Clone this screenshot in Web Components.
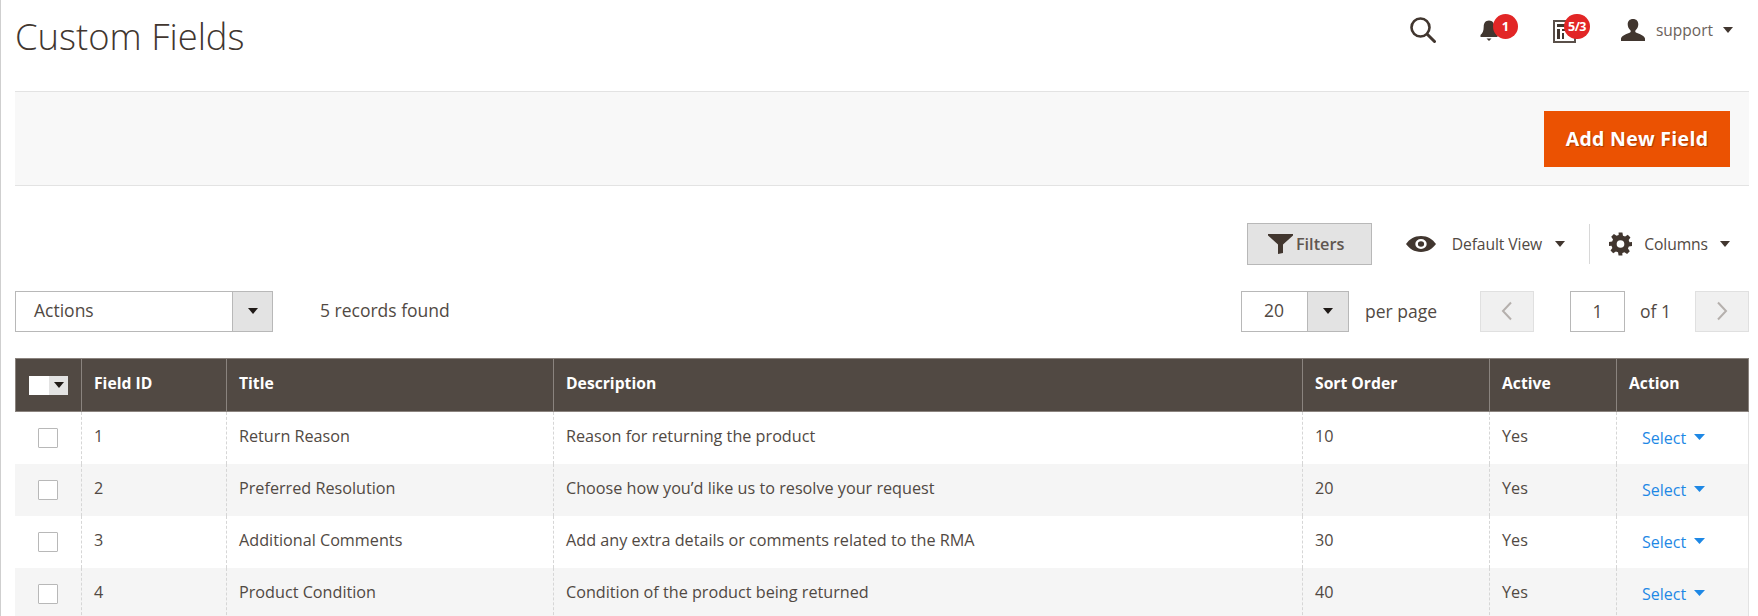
<!DOCTYPE html>
<html>
<head>
<meta charset="utf-8">
<title>Custom Fields</title>
<style>
    html, body { margin: 0; padding: 0; background: #fff; }
    body { font-family: "Open Sans", "Liberation Sans", sans-serif; color: #41362f; height: 616px; overflow: hidden; }
</style>
</head>
<body>
<admin-page>
    <page-header slot="header" heading="Custom Fields"></page-header>
    <action-bar slot="actions" label="Add New Field"></action-bar>
    <grid-toolbar slot="toolbar"></grid-toolbar>
    <grid-pager slot="pager" records="5 records found"></grid-pager>
    <data-grid slot="grid"></data-grid>
</admin-page>

<script>
const caret = (color = '#41362f', w = 10, h = 6) =>
    `<svg width="${w}" height="${h}" viewBox="0 0 10 6" preserveAspectRatio="none" style="display:block"><path d="M0 0h10L5 6z" fill="${color}"/></svg>`;

customElements.define('admin-page', class extends HTMLElement {
    constructor() {
        super();
        this.attachShadow({ mode: 'open' }).innerHTML = `
        <style>
            :host { display: block; height: 616px; box-sizing: border-box; border-left: 1px solid #cfcfcf; padding: 0 9px 0 14px; overflow: hidden; }
        </style>
        <slot name="header"></slot>
        <slot name="actions"></slot>
        <slot name="toolbar"></slot>
        <slot name="pager"></slot>
        <slot name="grid"></slot>`;
    }
});

customElements.define('page-header', class extends HTMLElement {
    constructor() {
        super();
        this.attachShadow({ mode: 'open' }).innerHTML = `
        <style>
            :host { display: flex; justify-content: space-between; height: 91px; box-sizing: border-box; }
            h1 { margin: 11px 0 0; font-size: 36.400px; line-height: 50px; font-weight: 300; color: #41362f; }
            .tools { display: flex; align-items: flex-start; padding-top: 14px; margin-right: 5px; }
            .tool { position: relative; display: block; height: 30px; }
            .search { margin: 3px 44px 0 0; width: 26px; }
            .bell { width: 39px; margin-right: 34px; }
            .msgs { width: 37px; margin-right: 31px; }
            .badge { position: absolute; top: 0; height: 25px; width: 25px; box-sizing: border-box; border-radius: 13px; background: #e22626; color: #fff; font-size: 13px; font-weight: 700; line-height: 25px; text-align: center; }
            .user { display: flex; align-items: center; height: 26px; font-size: 15.500px; color: #6b625b; }
            .user svg { margin-right: 11px; }
            .user span { margin-right: 10px; }
        </style>
        <h1></h1>
        <div class="tools">
            <div class="tool search">
                <svg width="26" height="26" viewBox="0 0 26 26" style="display:block"><circle cx="10.500" cy="10.500" r="9" fill="none" stroke="#41362f" stroke-width="2.600"/><path d="M17.500 17.500l7 7" stroke="#41362f" stroke-width="3" stroke-linecap="round"/></svg>
            </div>
            <div class="tool bell">
                <svg width="18" height="22" viewBox="0 0 18 22" style="display:block;margin-top:6px"><path d="M9 0.500c-3.600 0-5.300 2.800-5.300 6.200 0 4.300-1 6.400-3.200 8.400v1.900h17v-1.900c-2.200-2-3.200-4.100-3.200-8.400C14.300 3.300 12.600.5 9 .5z" fill="#41362f"/><path d="M6.500 18.500h5L9 21z" fill="#41362f"/></svg>
                <span class="badge" style="left:13px">1</span>
            </div>
            <div class="tool msgs">
                <svg width="23" height="23" viewBox="0 0 23 23" style="display:block;margin-top:6px"><path d="M1 1h21v21H1z" fill="#fff" stroke="#5a504a" stroke-width="2"/><path d="M4 4h15v3H4zM4 9h3v10H4zM9 9h10v2H9zM9 13h2v6H9z" fill="#41362f"/></svg>
                <span class="badge" style="left:11px;width:26px;font-size:12.500px;letter-spacing:-.6px">5/3</span>
            </div>
            <div class="user" style="margin-top:3px">
                <svg width="24" height="22" viewBox="0 0 24 24" preserveAspectRatio="none"><path d="M12 0c3.400 0 5.300 2.400 5.300 5.700 0 2.700-1.100 5.200-2.700 6.500-.5.500-.5 2 .3 2.600 2.700 1.700 8.100 2.500 9.100 6.600V24H0v-2.600c1-4.100 6.400-4.900 9.100-6.600.8-.6.8-2.100.3-2.600-1.600-1.300-2.700-3.800-2.700-6.500C6.700 2.400 8.600 0 12 0z" fill="#41362f"/></svg>
                <span>support</span>${caret('#41362f', 10, 6)}
            </div>
        </div>`;
        this.shadowRoot.querySelector('h1').textContent = this.getAttribute('heading');
    }
});

customElements.define('action-bar', class extends HTMLElement {
    constructor() {
        super();
        this.attachShadow({ mode: 'open' }).innerHTML = `
        <style>
            :host { display: flex; justify-content: flex-end; align-items: flex-start; height: 95px; box-sizing: border-box; background: #f8f8f8; border-top: 1px solid #e3e3e3; border-bottom: 1px solid #e3e3e3; padding: 19px 19px 0 0; }
            button { height: 56px; width: 186px; border: 0; padding: 0 0 2px; background: #eb5202; color: #fff; font: 700 19.500px "Open Sans", sans-serif; letter-spacing: .3px; text-shadow: 1px 1px 1px rgba(0, 0, 0, .3); }
        </style>
        <button></button>`;
        this.shadowRoot.querySelector('button').textContent = this.getAttribute('label');
    }
});

customElements.define('grid-toolbar', class extends HTMLElement {
    constructor() {
        super();
        this.attachShadow({ mode: 'open' }).innerHTML = `
        <style>
            :host { display: flex; justify-content: flex-end; align-items: center; height: 42px; margin-top: 37px; font-size: 15.700px; color: #514943; }
            .filters { width: 125px; height: 42px; box-sizing: border-box; display: flex; align-items: center; justify-content: center; gap: 3px; padding-right: 6px; background: #e3e3e3; border: 1px solid #b8b8b8; font-weight: 600; font-size: 16.300px; color: #5f5650; }
            .view { display: flex; align-items: center; margin-left: 34px; }
            .sep { width: 1px; height: 40px; background: #d8d8d8; margin: 0 19px 0 24px; }
            .cols { display: flex; align-items: center; margin-right: 19px; }
            .label { margin: 0 12px 0 12px; letter-spacing: -.1px; }
        </style>
        <div class="filters">
            <svg width="25" height="20" viewBox="0 0 25 20"><path d="M0 0h25v1.500L15 10.500V19l-5 1v-9.500L0 1.500z" fill="#41362f"/></svg>
            <span>Filters</span>
        </div>
        <div class="view">
            <svg width="30" height="16" viewBox="0 0 29 18" preserveAspectRatio="none"><path fill-rule="evenodd" d="M14.500 0C21 0 26 4 29 9c-3 5-8 9-14.500 9S3 14 0 9C3 4 8 0 14.500 0zm0 3.500a5.500 5.500 0 100 11 5.500 5.500 0 000-11zm0 2.500a3 3 0 110 6 3 3 0 010-6z" fill="#41362f"/></svg>
            <span class="label" style="margin:0 13px 0 16px">Default View</span>${caret('#41362f', 10, 6)}
        </div>
        <div class="sep"></div>
        <div class="cols">
            <svg width="23" height="24" viewBox="0 0 24 24"><path fill-rule="evenodd" d="M10 0h4l.6 3.300 2.200.9 2.800-1.900 2.800 2.800-1.900 2.800.9 2.200L24 10v4l-3.300.6-.9 2.200 1.900 2.800-2.800 2.800-2.800-1.900-2.200.9L14 24h-4l-.6-3.300-2.200-.9-2.800 1.900-2.800-2.800 1.900-2.800-.9-2.200L0 14v-4l3.300-.6.900-2.200-1.900-2.800 2.800-2.800 2.800 1.900 2.200-.9zM12 8a4 4 0 100 8 4 4 0 000-8z" fill="#41362f"/></svg>
            <span class="label">Columns</span>${caret('#41362f', 10, 6)}
        </div>`;
    }
});

customElements.define('select-box', class extends HTMLElement {
    constructor() {
        super();
        this.attachShadow({ mode: 'open' }).innerHTML = `
        <style>
            :host { display: flex; height: 41px; box-sizing: border-box; border: 1px solid #b8b8b8; background: #fff; font-size: 17.500px; color: #514943; }
            .value { flex: 1; display: flex; align-items: center; padding: 0 0 2px var(--pad, 18px); }
            .arrow { width: var(--arrow, 39px); display: flex; align-items: center; justify-content: center; background: #e3e3e3; border-left: 1px solid #b8b8b8; }
        </style>
        <div class="value"><slot></slot></div>
        <div class="arrow">${caret('#1f1a17', 10, 6)}</div>`;
    }
});

customElements.define('grid-pager', class extends HTMLElement {
    constructor() {
        super();
        this.attachShadow({ mode: 'open' }).innerHTML = `
        <style>
            :host { display: flex; align-items: center; height: 42px; margin-top: 25px; font-size: 17.500px; color: #514943; white-space: nowrap; }
            select-box.actions { width: 258px; }
            .found { margin: 0 0 3px 47px; flex: 1; }
            select-box.size { width: 108px; --pad: 22px; --arrow: 40px; }
            .per { margin: 0 0 1px 16px; width: 72px; }
            .nav { width: 54px; height: 41px; box-sizing: border-box; background: #f0f0f0; border: 1px solid #e0e0e0; display: flex; align-items: center; justify-content: center; }
            .prev { margin-left: 43px; }
            .page { width: 55px; height: 41px; box-sizing: border-box; border: 1px solid #b8b8b8; margin-left: 36px; display: flex; align-items: center; justify-content: center; }
            .of { margin: 0 25px 1px 15px; width: 30px; }
        </style>
        <select-box class="actions">Actions</select-box>
        <div class="found"></div>
        <select-box class="size">20</select-box>
        <span class="per">per page</span>
        <div class="nav prev"><svg width="12" height="20" viewBox="0 0 12 20"><path d="M10 1.500L2 10l8 8.500" fill="none" stroke="#b5b0ad" stroke-width="2"/></svg></div>
        <div class="page">1</div>
        <span class="of">of 1</span>
        <div class="nav next"><svg width="12" height="20" viewBox="0 0 12 20"><path d="M2 1.500l8 8.500-8 8.500" fill="none" stroke="#b5b0ad" stroke-width="2"/></svg></div>`;
        this.shadowRoot.querySelector('.found').textContent = this.getAttribute('records');
    }
});

const rows = [
    ['1', 'Return Reason', 'Reason for returning the product', '10', 'Yes'],
    ['2', 'Preferred Resolution', 'Choose how you\u2019d like us to resolve your request', '20', 'Yes'],
    ['3', 'Additional Comments', 'Add any extra details or comments related to the RMA', '30', 'Yes'],
    ['4', 'Product Condition', 'Condition of the product being returned', '40', 'Yes'],
];

customElements.define('data-grid', class extends HTMLElement {
    constructor() {
        super();
        const heads = ['Field ID', 'Title', 'Description', 'Sort Order', 'Active', 'Action'];
        this.attachShadow({ mode: 'open' }).innerHTML = `
        <style>
            :host { display: block; margin-top: 26px; font-size: 16.200px; color: #514943; --cols: 66px 145px 327px 749px 187px 127px 1fr; }
            .row { display: grid; grid-template-columns: var(--cols); }
            .head { height: 54px; box-sizing: border-box; background: #514943; color: #fff; font-weight: 700; border: 1px solid #8a837e; font-size: 15.700px; }
            .head > div { display: flex; align-items: center; padding: 0 0 5px 12px; border-left: 1px solid #8a837e; margin-left: -1px; }
            .head > div:first-child { border-left: 0; margin-left: 0; padding: 0 0 0 13px; }
            .body { height: 52px; border-right: 1px solid #e3e3e3; }
            .body:nth-child(even) { background: #f5f5f5; }
            .body > div { display: flex; align-items: center; padding: 0 0 4px 12px; border-left: 1px dashed #d6d6d6; }
            .body > div:first-child { border-left: 0; padding: 0 0 0 23px; }
            .pick { display: flex; width: 39px; height: 19px; background: #fff; }
            .pick i { width: 20px; background: #fff; }
            .pick b { flex: 1; background: #e3e3e3; display: flex; align-items: center; justify-content: center; }
            .box { width: 20px; height: 20px; box-sizing: border-box; border: 1px solid #b8b8b8; background: #fff; border-radius: 1px; }
            .select { color: #1e88e5; font-size: 16px; display: flex; align-items: center; gap: 8px; padding: 4px 0 0 13px; }
            .select svg { margin-bottom: 3px; }
        </style>
        <div class="row head">
            <div><span class="pick"><i></i><b>${caret('#1f1a17', 10, 6)}</b></span></div>
            ${heads.map(h => `<div>${h}</div>`).join('')}
        </div>
        ${rows.map(r => `
        <div class="row body">
            <div><span class="box"></span></div>
            ${r.map(c => `<div>${c}</div>`).join('')}
            <div><span class="select">Select ${caret('#1e88e5', 11, 6)}</span></div>
        </div>`).join('')}`;
    }
});
</script>
</body>
</html>
